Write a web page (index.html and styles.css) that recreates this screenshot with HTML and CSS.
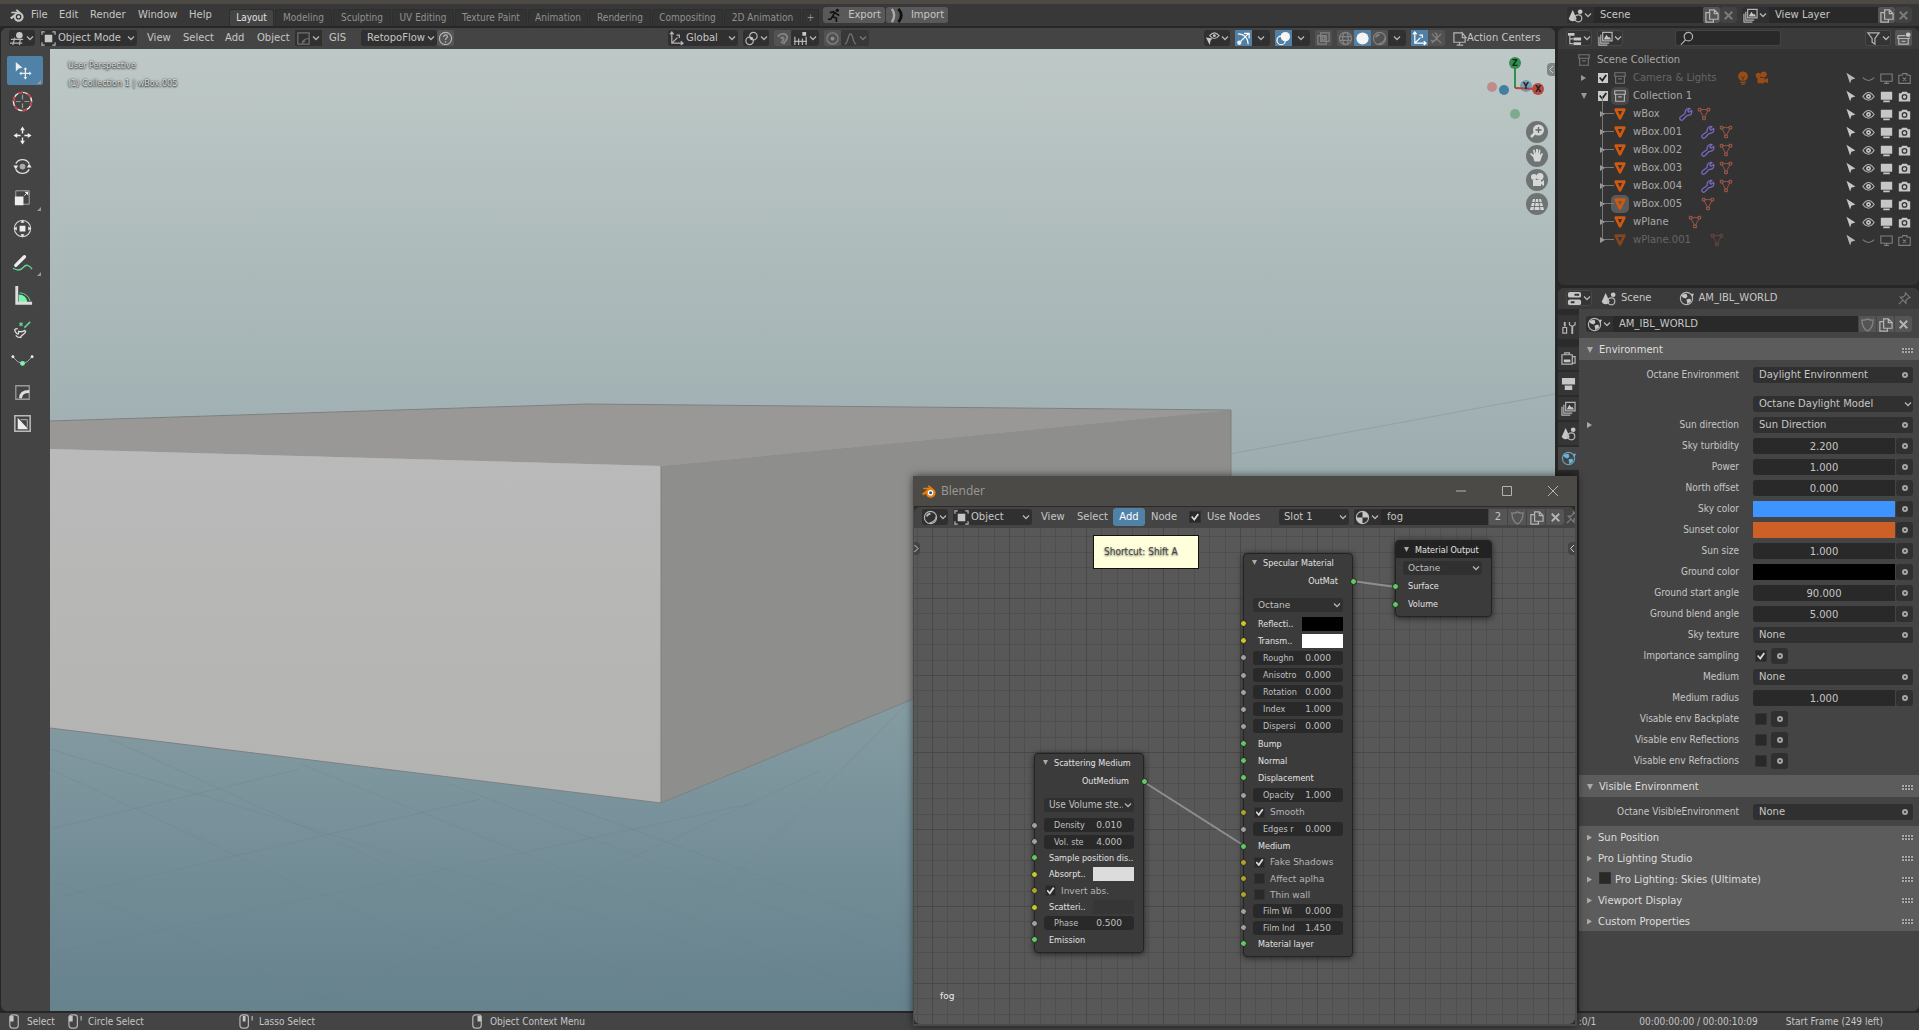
FILE: index.html
```html
<!DOCTYPE html>
<html lang="en">
<head>
<meta charset="utf-8">
<title>Blender</title>
<link rel="stylesheet" href="styles.css">
</head>
<body>
<svg class="defs" aria-hidden="true">
  <symbol id="caret" viewBox="0 0 10 10"><path class="ln" d="M2 3.5l3 3 3-3"/></symbol>
  <symbol id="blender" viewBox="0 0 16 16"><path class="lt" d="M1 10.500L7 5.500H2.500V4H9L7 2.500 8.500 1.200l5.500 4.600a5.200 5.200 0 1 1-8.800 4.200L3 12z"/><circle class="hole" cx="10.200" cy="9.300" r="3"/><circle class="pupil" cx="10.200" cy="9.300" r="1.600"/></symbol>
  <symbol id="view3d" viewBox="0 0 16 16"><path class="ln" d="M1 9h13M0 13h13M5 7l-2 8M11 9l-1 6"/><circle class="lt" cx="10" cy="4.500" r="3.500"/></symbol>
  <symbol id="objmode" viewBox="0 0 16 16"><path class="lt" d="M4 4h8v8H4z"/><path class="ln" d="M1 4V1h3M12 1h3v3M15 12v3h-3M4 15H1v-3"/></symbol>
  <symbol id="corner" viewBox="0 0 16 16"><path class="ln" d="M2 2h12v12H2zM7 14c0-4 2-6 7-6M7 14v-3h3"/></symbol>
  <symbol id="help" viewBox="0 0 16 16"><circle class="ln" cx="8" cy="8" r="6.500"/><path class="ln" d="M6 6.500c0-3 4-3 4-.5C10 7.500 8 7.500 8 9.500M8 11v1.500"/></symbol>
  <symbol id="axes" viewBox="0 0 16 16"><path class="ln" d="M3 1v12h12M3 13l6-6M1 3.500L3 1l2 2.500M12.500 11l2.500 2-2.500 2M8 4.500h3v3"/></symbol>
  <symbol id="link" viewBox="0 0 16 16"><circle class="ln" cx="10" cy="5.500" r="4"/><circle class="ln" cx="6" cy="10.500" r="4"/><circle class="lt" cx="8" cy="8" r="1.500"/></symbol>
  <symbol id="magnet" viewBox="0 0 16 16"><path class="thick" d="M3 6c4-5 10-3 10 1 0 3-3 4-4 7M6 8c2-2 4-1 3 1l-2 4"/></symbol>
  <symbol id="incr" viewBox="0 0 16 16"><path class="ln" d="M2 6v9M6 8v7M10 8v7M14 6v9M1 11h14"/><path class="lt" d="M10 1h4v4h-4z"/></symbol>
  <symbol id="prop" viewBox="0 0 16 16"><circle class="ln" cx="8" cy="8" r="6"/><circle class="lt" cx="8" cy="8" r="2"/></symbol>
  <symbol id="falloff" viewBox="0 0 16 16"><path class="ln" d="M2 14c4-1 3-11 6-11s2 10 6 11"/></symbol>
  <symbol id="eyecur" viewBox="0 0 16 16"><path class="lt" d="M1 7l7 1-2 2-1 5z"/><path class="ln" d="M5 5q5-6 10 0-5 6-10 0z"/><circle class="lt" cx="10" cy="5" r="1.500"/></symbol>
  <symbol id="gizmo" viewBox="0 0 16 16"><path class="ln" d="M2 3c7 0 11 5 11 11M3 13L13 3M8.500 2.500H14V8"/><circle class="lt" cx="3.500" cy="12.500" r="2.300"/></symbol>
  <symbol id="overlay" viewBox="0 0 16 16"><circle class="lt" cx="10" cy="6" r="5"/><circle class="ln" cx="5.500" cy="10" r="4.500"/></symbol>
  <symbol id="xray" viewBox="0 0 16 16"><path class="ln" d="M2 5h9v9H2zM5 2h9v9H5zM6.500 6.500h3v3h-3z"/></symbol>
  <symbol id="wire" viewBox="0 0 16 16"><circle class="ln" cx="8" cy="8" r="6.500"/><ellipse class="ln" cx="8" cy="8" rx="3" ry="6.500"/><path class="ln" d="M2 6h12M2 10h12"/></symbol>
  <symbol id="solid" viewBox="0 0 16 16"><circle class="lt" cx="8" cy="8" r="6.500"/></symbol>
  <symbol id="matball" viewBox="0 0 16 16"><circle class="ln" cx="8" cy="8" r="6.500"/><path class="thick" d="M4 7q1-3 4-3"/><path class="ln" d="M7 14q7-2 7-7"/></symbol>
  <symbol id="shader" viewBox="0 0 16 16"><circle class="ln" cx="8" cy="8" r="6.500"/><path class="lt" d="M8 1.500v6.500h6.500A6.500 6.500 0 0 0 8 1.500zM8 8v6.500A6.500 6.500 0 0 1 1.500 8z"/></symbol>
  <symbol id="cross4" viewBox="0 0 16 16"><path class="ln" d="M3 3l10 10M13 3L3 13M6 2q4 1 2 6M2 10q5 2 6-2"/></symbol>
  <symbol id="screen" viewBox="0 0 16 16"><path class="ln" d="M14 7v5H2V2h9M8 12v3M5 15h7M11 2l4 5h-4z"/></symbol>
  <symbol id="scene" viewBox="0 0 16 16"><path class="lt" d="M5 2l4 9q0 3-4 3t-4-3z"/><circle class="lt" cx="13" cy="4" r="2.500"/><circle class="ln" cx="11" cy="11" r="3.700"/></symbol>
  <symbol id="layers" viewBox="0 0 16 16"><path class="ln" d="M5 1.500h10v9H5zM3 4v9h9M1 6v9h9"/><path class="lt" d="M6 9l3-5 2 3 1-1 2 3z"/></symbol>
  <symbol id="copy" viewBox="0 0 16 16"><path class="ln" d="M6 2h5l4 4v6H6zM11 2v4h4M6 5H2v10h8v-3"/></symbol>
  <symbol id="close" viewBox="0 0 16 16"><path class="thick" d="M4 4l8 8M12 4l-8 8"/></symbol>
  <symbol id="outliner" viewBox="0 0 16 16"><path class="lt" d="M1 2h7v3H1zM7 7h8v3H7zM7 12h8v3H7z"/><path class="ln" d="M3 5v8.500h4M3 8.500h4"/></symbol>
  <symbol id="search" viewBox="0 0 16 16"><circle class="ln" cx="10" cy="6" r="4.500"/><path class="ln" d="M7 9.500l-5 5"/></symbol>
  <symbol id="filter" viewBox="0 0 16 16"><path class="ln" d="M2 2h12L9.500 8v6l-3-2V8z"/></symbol>
  <symbol id="newcol" viewBox="0 0 16 16"><path class="ln" d="M2 5h8M2 5v3h12V7M3 8v6h10V8M6 11h4"/><circle class="lt" cx="13" cy="4" r="2.500"/></symbol>
  <symbol id="coll" viewBox="0 0 16 16"><path class="ln" d="M2 2h12v4H2zM3 6v8h10V6M6 9h4"/></symbol>
  <symbol id="mesh" viewBox="0 0 16 16"><path fill="none" stroke="#d0590f" stroke-width="3" stroke-linejoin="round" d="M3 3h10L8 13z"/></symbol>
  <symbol id="mdata" viewBox="0 0 16 16"><path fill="none" stroke="#a4574a" d="M3 3h10L8 13z"/><path fill="#333" stroke="#b8604f" d="M1.500 1.500h3v3h-3zM11.500 1.500h3v3h-3zM6.500 11.500h3v3h-3z"/></symbol>
  <symbol id="wrench" viewBox="0 0 16 16"><path fill="none" stroke="#7c68c4" stroke-width="1.400" d="M1.500 14.500q-1.500-2 .5-3.500l5-3.500q-.5-5 4-6 1 0 1.500.3L10 4.500l1.500 1.500L14.500 4q1 5-4 5.500l-1.500.3L5 14q-1.500 2-3.500.5z"/></symbol>
  <symbol id="bulb" viewBox="0 0 16 16"><circle cx="8" cy="6" r="5.500" fill="#9a4c17"/><path stroke="#9a4c17" stroke-width="1.500" d="M5 13h6M6 15h4"/><path fill="none" stroke="#333" d="M6 6l2 2 2-2M8 8v3"/></symbol>
  <symbol id="cam" viewBox="0 0 16 16"><g fill="#9a4c17"><circle cx="5" cy="5" r="3"/><circle cx="11" cy="4" r="3.500"/><path d="M4 8h8v6H4zM12 10l4-2v6l-4-2z"/></g></symbol>
  <symbol id="cur" viewBox="0 0 16 16"><path class="lt" d="M3 1l11 7-5 1.500L7.500 14z"/></symbol>
  <symbol id="eye" viewBox="0 0 16 16"><path class="ln" d="M1 8q7-10 14 0-7 9-14 0z"/><circle class="lt" cx="8" cy="8" r="3"/><circle class="hole" cx="8" cy="8" r="1"/></symbol>
  <symbol id="shut" viewBox="0 0 16 16"><path class="ln" d="M1 7q7 7 14 0"/></symbol>
  <symbol id="mon" viewBox="0 0 16 16"><path class="lt" d="M1 2h14v10H1zM4 13h8v2H4z"/></symbol>
  <symbol id="monoff" viewBox="0 0 16 16"><path class="ln" d="M1 2.500h14v9H1zM5 14h6M8 12v2"/></symbol>
  <symbol id="ren" viewBox="0 0 16 16"><path class="lt" d="M1 4h3l1-2h6l1 2h3v10H1z"/><circle class="hole" cx="8" cy="8.500" r="3.500"/><circle class="lt" cx="8" cy="8.500" r="2"/></symbol>
  <symbol id="renoff" viewBox="0 0 16 16"><path class="ln" d="M1 4h4l1-2h5v2h4v10H1zM6 7l4 4M10 7l-4 4"/></symbol>
  <symbol id="props" viewBox="0 0 16 16"><rect class="lt" x="1" y="1" width="14" height="6" rx="2"/><rect class="lt" x="1" y="9" width="14" height="6" rx="2"/><path stroke="#333" stroke-width="2" d="M8 4h5M4 12h4"/></symbol>
  <symbol id="world" viewBox="0 0 16 16"><circle class="ln" cx="8" cy="8" r="6.500"/><path class="lt" d="M2 4l6-1 1 3-2 2-3-1zM8 9l4-1 1 3-4 3zM13 3h3l-2 4z"/></symbol>
  <symbol id="pin" viewBox="0 0 16 16"><path class="ln" d="M9 2l5 5-2 .5-2.500 2.500v3L3.500 6.500h3L9 4zM6 10l-4 4"/></symbol>
  <symbol id="shield" viewBox="0 0 16 16"><path class="ln" d="M8 2q3 2 6 1 0 9-6 12-6-3-6-12 3 1 6-1z"/></symbol>
  <symbol id="tool" viewBox="0 0 16 16"><path class="thick" d="M4 2v5M12 7v8"/><path class="ln" d="M2 8h4v6H2zM9 2v3l3 2 3-2V2"/></symbol>
  <symbol id="rentab" viewBox="0 0 16 16"><path class="ln" d="M1 4h11v10H1zM4 4V2h5v2M12 6h3v7h-3"/><path class="lt" d="M3 9h7v3H3z"/></symbol>
  <symbol id="printer" viewBox="0 0 16 16"><path class="lt" d="M1 2h14v7H1zM4 10h8v5H4z"/></symbol>
  <symbol id="run" viewBox="0 0 16 16"><path fill="none" stroke="#111" stroke-width="1.800" d="M3 5l4-1 3 2 3 2M8 5L6 9l4 2v4M6 9l-2 3H1"/><circle cx="11" cy="2.500" r="1.800" fill="#111"/></symbol>
  <symbol id="chevs" viewBox="0 0 16 16"><path fill="none" stroke="#aaa" stroke-width="2.500" d="M2 1q5 7 0 14"/><path fill="none" stroke="#111" stroke-width="3" d="M9 1q6 7 0 14"/></symbol>
  <symbol id="mouseL" viewBox="0 0 16 16"><rect class="ln" x="3" y="1" width="9" height="14" rx="3"/><path class="lt" d="M3 2h4v6H3z"/></symbol>
  <symbol id="mouseD" viewBox="0 0 16 16"><rect class="ln" x="1" y="1" width="9" height="14" rx="3"/><path class="lt" d="M1 2h4v6H1z"/><path class="ln" d="M14 2v5"/></symbol>
  <symbol id="mouseM" viewBox="0 0 16 16"><rect class="ln" x="1" y="1" width="9" height="14" rx="3"/><path class="lt" d="M4 2h3v6H4z"/><path class="ln" d="M14 2v5"/></symbol>
  <symbol id="mouseR" viewBox="0 0 16 16"><rect class="ln" x="3" y="1" width="9" height="14" rx="3"/><path class="lt" d="M8 2h4v6H8z"/></symbol>
</svg>

<div class="app">
  <div class="strip"></div>
  <header class="topbar">
    <div class="top-left">
      <button class="logo" aria-label="Blender"><svg class="ic"><use href="#blender"/></svg></button>
      <nav class="menus"><button>File</button><button>Edit</button><button>Render</button><button>Window</button><button>Help</button></nav>
      <nav class="tabs"><button class="on">Layout</button><button>Modeling</button><button>Sculpting</button><button>UV Editing</button><button>Texture Paint</button><button>Animation</button><button>Rendering</button><button>Compositing</button><button>2D Animation</button><button>+</button></nav>
      <div class="bridge"><button><svg class="ic"><use href="#run"/></svg>Export</button><button><svg class="ic"><use href="#chevs"/></svg>Import</button></div>
    </div>
    <div class="top-right">
      <div class="idblock"><button class="pick"><svg class="ic"><use href="#scene"/></svg><svg class="car"><use href="#caret"/></svg></button><input aria-label="Scene" value="Scene"><button class="sq"><svg class="ic"><use href="#copy"/></svg></button><button class="sq dim"><svg class="ic"><use href="#close"/></svg></button></div>
      <div class="idblock"><button class="pick"><svg class="ic"><use href="#layers"/></svg><svg class="car"><use href="#caret"/></svg></button><input aria-label="View Layer" value="View Layer"><button class="sq"><svg class="ic"><use href="#copy"/></svg></button><button class="sq dim"><svg class="ic"><use href="#close"/></svg></button></div>
    </div>
  </header>

  <main class="work">
    <section class="area view">
      <div class="bar vbar">
        <button class="dd"><svg class="ic"><use href="#view3d"/></svg><svg class="car"><use href="#caret"/></svg></button>
        <div class="dd mode"><svg class="ic"><use href="#objmode"/></svg><select aria-label="Mode"><option>Object Mode</option></select><svg class="car"><use href="#caret"/></svg></div>
        <nav class="vmenus"><button>View</button><button>Select</button><button>Add</button><button>Object</button></nav>
        <button class="dd flat"><svg class="ic faint"><use href="#corner"/></svg><svg class="car"><use href="#caret"/></svg></button>
        <button class="gis">GIS</button>
        <div class="grp"><div class="dd retopo"><select aria-label="RetopoFlow"><option>RetopoFlow</option></select><svg class="car"><use href="#caret"/></svg></div><button class="sq"><svg class="ic"><use href="#help"/></svg></button></div>
        <div class="mid">
          <div class="dd orient"><svg class="ic"><use href="#axes"/></svg><select aria-label="Orientation"><option>Global</option></select><svg class="car"><use href="#caret"/></svg></div>
          <button class="dd"><svg class="ic"><use href="#link"/></svg><svg class="car"><use href="#caret"/></svg></button>
          <div class="grp"><button class="sq off"><svg class="ic"><use href="#magnet"/></svg></button><button class="dd wide"><svg class="ic"><use href="#incr"/></svg><svg class="car"><use href="#caret"/></svg></button></div>
          <div class="grp"><button class="sq off"><svg class="ic"><use href="#prop"/></svg></button><button class="dd wide ghost"><svg class="ic"><use href="#falloff"/></svg><svg class="car"><use href="#caret"/></svg></button></div>
        </div>
        <div class="shade">
          <button class="dd"><svg class="ic"><use href="#eyecur"/></svg><svg class="car"><use href="#caret"/></svg></button>
          <div class="grp"><button class="sq blue"><svg class="ic"><use href="#gizmo"/></svg></button><button class="dd cc"><svg class="car"><use href="#caret"/></svg></button></div>
          <div class="grp"><button class="sq blue"><svg class="ic"><use href="#overlay"/></svg></button><button class="dd cc"><svg class="car"><use href="#caret"/></svg></button></div>
          <button class="sq off"><svg class="ic"><use href="#xray"/></svg></button>
          <div class="grp"><button class="sq off"><svg class="ic"><use href="#wire"/></svg></button><button class="sq blue"><svg class="ic"><use href="#solid"/></svg></button><button class="sq off"><svg class="ic"><use href="#matball"/></svg></button><button class="dd cc"><svg class="car"><use href="#caret"/></svg></button></div>
          <div class="grp"><button class="sq blue"><svg class="ic"><use href="#axes"/></svg></button><button class="sq off"><svg class="ic"><use href="#cross4"/></svg></button></div>
          <button class="actions"><svg class="ic"><use href="#screen"/></svg>Action Centers</button>
        </div>
      </div>
      <div class="stage">
        <div class="toolbar">
          <button class="on" aria-label="Select"><svg viewBox="0 0 24 24"><path fill="#eee" d="M5 3l7 6-4 1-3 3z"/><path stroke="#eee" fill="none" stroke-width="1.300" d="M15 10v10M10 15h10"/><path fill="#eee" d="M15 8.500l2 2.500h-4zM15 21.500l2-2.500h-4zM8.500 15l2.500-2v4zM21.500 15L19 13v4z"/></svg></button>
          <button aria-label="Cursor"><svg viewBox="0 0 24 24"><circle cx="12" cy="12" r="9.500" fill="none" stroke="#e8e8e8" stroke-width="1.500"/><circle cx="12" cy="12" r="9.500" fill="none" stroke="#c8383c" stroke-width="1.800" stroke-dasharray="5 5"/><path stroke="#999" stroke-width="1.300" d="M12 5v5M12 14v5M5 12h5M14 12h5"/></svg></button>
          <button class="sep" aria-label="Move"><svg viewBox="0 0 24 24"><path stroke="#eee" stroke-width="1.500" d="M12 6v4M12 14v4M6 12h4M14 12h4"/><path fill="#eee" d="M12 2.500l2.500 4h-5zM12 21.500l2.500-4h-5zM2.500 12l4-2.500v5zM21.500 12l-4-2.500v5z"/></svg></button>
          <button aria-label="Rotate"><svg viewBox="0 0 24 24"><path fill="none" stroke="#ddd" stroke-width="1.400" d="M5 9a8 8 0 0 1 14 0M19 15a8 8 0 0 1-14 0"/><path fill="#eee" d="M2.500 11h5L5 15zM16.500 13h5L19 9z"/><circle cx="12" cy="12" r="3" fill="#aaa"/></svg></button>
          <button class="more" aria-label="Scale"><svg viewBox="0 0 24 24"><path fill="none" stroke="#aaa" d="M5 5h14v14H5z"/><path fill="#eee" d="M4 11h9v9H4zM18 6v4l-4-4z"/><path stroke="#eee" d="M14 10l3-3"/></svg></button>
          <button aria-label="Transform"><svg viewBox="0 0 24 24"><circle cx="12" cy="12" r="8.500" fill="none" stroke="#ccc" stroke-width="1.200"/><path fill="#eee" d="M9 9h6v6H9zM12 3l2 3h-4zM12 21l2-3h-4zM3 12l3-2v4zM21 12l-3-2v4z"/></svg></button>
          <button class="sep more" aria-label="Annotate"><svg viewBox="0 0 24 24"><path stroke="#eee" stroke-width="3.500" stroke-linecap="round" d="M5 15l9-9"/><path fill="none" stroke="#62d694" stroke-width="1.400" d="M2 18q7 4 11-1t9 2"/></svg></button>
          <button class="sep" aria-label="Measure"><svg viewBox="0 0 24 24"><path fill="#7bf5ae" d="M8 10q8 0 9 8H8z"/><path fill="none" stroke="#ddd" stroke-width="3" d="M6 1v18h16"/><path fill="none" stroke="#62d694" d="M9 8q9 1 11 9"/></svg></button>
          <button class="sep" aria-label="Relax"><svg viewBox="0 0 24 24"><path fill="none" stroke="#ddd" stroke-width="1.400" d="M7 10q-5 0-2 4t3-1q4 1 6-1 3 1-1 4t-2 3q-4 1-6-2"/><path stroke="#62d694" stroke-width="1.500" d="M14 9l6-6M9 4l3 3M12 4L9 7"/></svg></button>
          <button aria-label="Curve"><svg viewBox="0 0 24 24"><path fill="none" stroke="#aaa" d="M2 7q10 14 20 0"/><circle cx="2" cy="7" r="1.500" fill="#eee"/><circle cx="22" cy="7" r="1.500" fill="#eee"/><circle cx="12" cy="14" r="2.500" fill="#7bf5ae"/></svg></button>
          <button aria-label="Bevel"><svg viewBox="0 0 24 24"><path fill="none" stroke="#999" stroke-width="1.400" d="M5 5h14v14H5z"/><path fill="none" stroke="#ddd" stroke-width="3" d="M10 18q0-7 9-7"/></svg></button>
          <button aria-label="Mirror"><svg viewBox="0 0 24 24"><path fill="none" stroke="#bbb" stroke-width="1.600" d="M4 4h16v16H4z"/><path fill="#eee" d="M7 6l11 12H7z"/><path fill="none" stroke="#bbb" d="M10 8h7v8"/></svg></button>
        </div>
        <div class="scene3d">
          <svg class="world3d" viewBox="0 0 1505 962" preserveAspectRatio="xMinYMin slice">
            <defs>
              <linearGradient id="sky" x1="0" y1="0" x2="0" y2="1"><stop offset="0" stop-color="#bec9c7"/><stop offset=".2" stop-color="#afbcbc"/><stop offset=".4" stop-color="#a0b0b2"/><stop offset=".6" stop-color="#8ea2a7"/><stop offset=".8" stop-color="#78919a"/><stop offset="1" stop-color="#66828d"/></linearGradient>
              <linearGradient id="front" x1="0" y1="0" x2="0" y2="1"><stop offset="0" stop-color="#bababa"/><stop offset="1" stop-color="#b3b3b1"/></linearGradient>
            </defs>
            <path fill="url(#sky)" d="M0 0h1505v962H0z"/>
            <g fill="none" stroke="#6d8084" stroke-opacity=".3">
              <path d="M0 720l520 242M0 830l300 132M60 690l600 272M250 715l620 247M400 735l520 200M500 750l380 140M0 905l700-150M0 850l430-100M550 962l420-420M250 962l520-240M0 780l250-60M1180 405l325-60M820 962l100-110M0 700l860 262"/>
            </g>
            <path stroke="#a9655e" d="M825 646l80 4"/>
            <path fill="#999896" d="M0 372l537-17 644 6-570 56L0 400z"/>
            <path fill="url(#front)" d="M0 400l611 17v337L0 679z"/>
            <path fill="#8e8e8c" d="M611 417l570-56v158L611 754z"/>
            <path fill="none" stroke="#7d8180" d="M0 372l537-17 644 6v158L611 754 0 679M611 417v337"/>
          </svg>
          <div class="info"><p>User Perspective</p><p>(1) Collection 1 | wBox.005</p></div>
          <div class="overlay">
            <button class="handle" aria-label="Sidebar">
              <svg viewBox="0 0 8 13"><path d="M6 3L2.500 6.500 6 10"/></svg></button>
            <svg class="axisball" viewBox="0 0 64 72">
              <circle cx="10" cy="31" r="5" fill="#bf8c89"/><circle cx="22" cy="34" r="5" fill="#437f9f"/><circle cx="33" cy="58" r="5" fill="#7dab8c"/><circle cx="44" cy="30" r="6" fill="#779eb2"/>
              <path stroke="#2f9050" stroke-width="2" d="M33 32V10"/><path stroke="#b8443f" stroke-width="2" d="M33 32l22 1"/>
              <circle cx="33" cy="7" r="6" fill="#2f9050"/><circle cx="56" cy="33" r="6" fill="#b84a44"/>
              <text x="33" y="10">Z</text><text x="56" y="36">X</text><text x="44" y="33">Y</text>
            </svg>
            <div class="nav">
              <button aria-label="Zoom"><svg viewBox="0 0 22 22"><circle cx="12.500" cy="9" r="5.500"/><path stroke="#d5d8d7" stroke-width="2.500" d="M9 12l-4 4"/><path stroke="#666" stroke-width="1.300" d="M12.500 6v6M9.500 9h6"/></svg></button>
              <button aria-label="Pan"><svg viewBox="0 0 22 22"><path d="M7 12l-3-3 1-1 3 2-1-5 1.500-.5L10 9V4h2v5l1-4.500 1.500.5-.500 5 2-2 1 .5-3 8H8.500z"/></svg></button>
              <button aria-label="Camera"><svg viewBox="0 0 22 22"><circle cx="8" cy="8" r="3"/><circle cx="14" cy="7.500" r="3.500"/><path d="M7 11h8v6H7zM15 13l3-2v6l-3-2z"/></svg></button>
              <button aria-label="Perspective"><svg viewBox="0 0 22 22"><path d="M7 6h8l3 11H4z"/><path stroke="#6e7473" d="M4 9.500h14M4 13.500h14M9.500 6L8 17M12.500 6L14 17"/></svg></button>
            </div>
          </div>
        </div>
      </div>
    </section>

    <aside class="side">
      <section class="area outl">
        <div class="bar obar">
          <button class="dd edge"><svg class="ic"><use href="#outliner"/></svg><svg class="car"><use href="#caret"/></svg></button>
          <button class="dd edge"><svg class="ic"><use href="#layers"/></svg><svg class="car"><use href="#caret"/></svg></button>
          <label class="find"><svg class="ic"><use href="#search"/></svg><input type="search" aria-label="Search"></label>
          <button class="dd edge"><svg class="ic"><use href="#filter"/></svg><svg class="car"><use href="#caret"/></svg></button>
          <button class="sq"><svg class="ic"><use href="#newcol"/></svg></button>
        </div>
        <ul class="tree">
          <li class="root"><svg class="ic faint"><use href="#coll"/></svg><span>Scene Collection</span></li>
          <li class="dim"><i class="tri"></i><input type="checkbox" checked aria-label="Camera &amp; Lights"><svg class="ic faint"><use href="#coll"/></svg><span>Camera &amp; Lights</span><svg class="ic ex"><use href="#bulb"/></svg><svg class="ic"><use href="#cam"/></svg><div class="tg"><svg><use href="#cur"/></svg><svg><use href="#shut"/></svg><svg><use href="#monoff"/></svg><svg><use href="#renoff"/></svg></div></li>
          <li><i class="tri down"></i><input type="checkbox" checked aria-label="Collection 1"><svg class="ic ring"><use href="#coll"/></svg><span>Collection 1</span><div class="tg"><svg><use href="#cur"/></svg><svg><use href="#eye"/></svg><svg><use href="#mon"/></svg><svg><use href="#ren"/></svg></div></li>
          <li class="kid"><i class="tri"></i><svg class="ic"><use href="#mesh"/></svg><span>wBox</span><svg class="ic ex"><use href="#wrench"/></svg><svg class="ic"><use href="#mdata"/></svg><div class="tg"><svg><use href="#cur"/></svg><svg><use href="#eye"/></svg><svg><use href="#mon"/></svg><svg><use href="#ren"/></svg></div></li>
          <li class="kid"><i class="tri"></i><svg class="ic"><use href="#mesh"/></svg><span>wBox.001</span><svg class="ic ex"><use href="#wrench"/></svg><svg class="ic"><use href="#mdata"/></svg><div class="tg"><svg><use href="#cur"/></svg><svg><use href="#eye"/></svg><svg><use href="#mon"/></svg><svg><use href="#ren"/></svg></div></li>
          <li class="kid"><i class="tri"></i><svg class="ic"><use href="#mesh"/></svg><span>wBox.002</span><svg class="ic ex"><use href="#wrench"/></svg><svg class="ic"><use href="#mdata"/></svg><div class="tg"><svg><use href="#cur"/></svg><svg><use href="#eye"/></svg><svg><use href="#mon"/></svg><svg><use href="#ren"/></svg></div></li>
          <li class="kid"><i class="tri"></i><svg class="ic"><use href="#mesh"/></svg><span>wBox.003</span><svg class="ic ex"><use href="#wrench"/></svg><svg class="ic"><use href="#mdata"/></svg><div class="tg"><svg><use href="#cur"/></svg><svg><use href="#eye"/></svg><svg><use href="#mon"/></svg><svg><use href="#ren"/></svg></div></li>
          <li class="kid"><i class="tri"></i><svg class="ic"><use href="#mesh"/></svg><span>wBox.004</span><svg class="ic ex"><use href="#wrench"/></svg><svg class="ic"><use href="#mdata"/></svg><div class="tg"><svg><use href="#cur"/></svg><svg><use href="#eye"/></svg><svg><use href="#mon"/></svg><svg><use href="#ren"/></svg></div></li>
          <li class="kid"><i class="tri"></i><svg class="ic ring fill"><use href="#mesh"/></svg><span>wBox.005</span><svg class="ic ex"><use href="#mdata"/></svg><div class="tg"><svg><use href="#cur"/></svg><svg><use href="#eye"/></svg><svg><use href="#mon"/></svg><svg><use href="#ren"/></svg></div></li>
          <li class="kid"><i class="tri"></i><svg class="ic"><use href="#mesh"/></svg><span>wPlane</span><svg class="ic ex"><use href="#mdata"/></svg><div class="tg"><svg><use href="#cur"/></svg><svg><use href="#eye"/></svg><svg><use href="#mon"/></svg><svg><use href="#ren"/></svg></div></li>
          <li class="kid dim last"><i class="tri"></i><svg class="ic half"><use href="#mesh"/></svg><span>wPlane.001</span><svg class="ic ex half"><use href="#mdata"/></svg><div class="tg lit"><svg><use href="#cur"/></svg><svg><use href="#shut"/></svg><svg><use href="#monoff"/></svg><svg><use href="#renoff"/></svg></div></li>
        </ul>
      </section>

      <section class="area props">
        <div class="bar pbar">
          <button class="dd edge"><svg class="ic"><use href="#props"/></svg><svg class="car"><use href="#caret"/></svg></button>
          <span class="crumb"><svg class="ic"><use href="#scene"/></svg>Scene</span>
          <span class="crumb"><svg class="ic"><use href="#world"/></svg>AM_IBL_WORLD</span>
          <button class="bare"><svg class="ic faint"><use href="#pin"/></svg></button>
        </div>
        <div class="pmain">
          <nav class="ptabs">
            <button class="first" aria-label="Tool"><svg class="ic"><use href="#tool"/></svg></button>
            <button aria-label="Render"><svg class="ic"><use href="#rentab"/></svg></button>
            <button aria-label="Output"><svg class="ic"><use href="#printer"/></svg></button>
            <button aria-label="View Layer"><svg class="ic"><use href="#layers"/></svg></button>
            <button aria-label="Scene"><svg class="ic"><use href="#scene"/></svg></button>
            <button class="on" aria-label="World"><svg class="ic"><use href="#world"/></svg></button>
          </nav>
          <div class="pbody">
            <div class="idblock wide"><button class="pick"><svg class="ic"><use href="#world"/></svg><svg class="car"><use href="#caret"/></svg></button><input aria-label="World" value="AM_IBL_WORLD"><button class="sq g"><svg class="ic faint"><use href="#shield"/></svg></button><button class="sq g"><svg class="ic"><use href="#copy"/></svg></button><button class="sq g"><svg class="ic"><use href="#close"/></svg></button></div>

            <button class="phead"><i class="tri down"></i>Environment<i class="grip"></i></button>
            <div class="rows">
              <div class="r first"><label for="f1">Octane Environment</label><div class="sel"><select id="f1"><option>Daylight Environment</option></select><b class="dot"></b></div></div>
              <div class="r"><span></span><div class="sel"><select aria-label="Daylight model"><option>Octane Daylight Model</option></select><svg class="car"><use href="#caret"/></svg></div></div>
              <div class="r"><i class="tri"></i><label for="f3">Sun direction</label><div class="sel"><select id="f3"><option>Sun Direction</option></select><b class="dot"></b></div></div>
              <div class="r"><label for="f4">Sky turbidity</label><div class="num"><input id="f4" value="2.200"><b class="dot"></b></div></div>
              <div class="r"><label for="f5">Power</label><div class="num"><input id="f5" value="1.000"><b class="dot"></b></div></div>
              <div class="r"><label for="f6">North offset</label><div class="num"><input id="f6" value="0.000"><b class="dot"></b></div></div>
              <div class="r"><label for="f7">Sky color</label><div class="num"><button id="f7" class="sw sky"></button><b class="dot"></b></div></div>
              <div class="r"><label for="f8">Sunset color</label><div class="num"><button id="f8" class="sw sunset"></button><b class="dot"></b></div></div>
              <div class="r"><label for="f9">Sun size</label><div class="num"><input id="f9" value="1.000"><b class="dot"></b></div></div>
              <div class="r"><label for="f10">Ground color</label><div class="num"><button id="f10" class="sw black"></button><b class="dot"></b></div></div>
              <div class="r"><label for="f11">Ground start angle</label><div class="num"><input id="f11" value="90.000"><b class="dot"></b></div></div>
              <div class="r"><label for="f12">Ground blend angle</label><div class="num"><input id="f12" value="5.000"><b class="dot"></b></div></div>
              <div class="r"><label for="f13">Sky texture</label><div class="sel"><select id="f13"><option>None</option></select><b class="dot"></b></div></div>
              <div class="r"><label for="f14">Importance sampling</label><div class="chk"><input type="checkbox" id="f14" checked><b class="dot"></b></div></div>
              <div class="r"><label for="f15">Medium</label><div class="sel"><select id="f15"><option>None</option></select><b class="dot"></b></div></div>
              <div class="r"><label for="f16">Medium radius</label><div class="num"><input id="f16" value="1.000"><b class="dot"></b></div></div>
              <div class="r"><label for="f17">Visable env Backplate</label><div class="chk"><input type="checkbox" id="f17"><b class="dot"></b></div></div>
              <div class="r"><label for="f18">Visable env Reflections</label><div class="chk"><input type="checkbox" id="f18"><b class="dot"></b></div></div>
              <div class="r"><label for="f19">Visable env Refractions</label><div class="chk"><input type="checkbox" id="f19"><b class="dot"></b></div></div>
            </div>
            <button class="phead"><i class="tri down"></i>Visible Environment<i class="grip"></i></button>
            <div class="rows">
              <div class="r"><label for="f20">Octane VisibleEnvironment</label><div class="sel"><select id="f20"><option>None</option></select><b class="dot"></b></div></div>
            </div>
            <button class="phead shut"><i class="tri"></i>Sun Position<i class="grip"></i></button>
            <button class="phead shut"><i class="tri"></i>Pro Lighting Studio<i class="grip"></i></button>
            <div class="phead shut"><i class="tri"></i><input type="checkbox" id="skies"><label for="skies">Pro Lighting: Skies (Ultimate)</label><i class="grip"></i></div>
            <button class="phead shut"><i class="tri"></i>Viewport Display<i class="grip"></i></button>
            <button class="phead shut"><i class="tri"></i>Custom Properties<i class="grip"></i></button>
          </div>
        </div>
      </section>
    </aside>
  </main>

  <footer class="status">
    <span class="s1"><svg class="ic"><use href="#mouseL"/></svg>Select</span>
    <span class="s2"><svg class="ic"><use href="#mouseD"/></svg>Circle Select</span>
    <span class="s3"><svg class="ic"><use href="#mouseM"/></svg>Lasso Select</span>
    <span class="s4"><svg class="ic"><use href="#mouseR"/></svg>Object Context Menu</span>
    <span class="frames">:0/1</span><span class="time">00:00:00:00 / 00:00:10:09</span><span class="start">Start Frame (249 left)</span>
  </footer>
</div>

<section class="window">
  <div class="title"><svg class="ic"><use href="#blender"/></svg><span>Blender</span>
    <button aria-label="Minimize"><svg viewBox="0 0 12 12"><path d="M1 6h10"/></svg></button><button aria-label="Maximize"><svg viewBox="0 0 12 12"><path d="M1.500 1.500h9v9h-9z"/></svg></button><button aria-label="Close"><svg viewBox="0 0 12 12"><path d="M1 1l10 10M11 1L1 11"/></svg></button></div>
  <div class="bar nbar">
    <button class="dd"><svg class="ic"><use href="#matball"/></svg><svg class="car"><use href="#caret"/></svg></button>
    <div class="dd kind"><svg class="ic"><use href="#objmode"/></svg><select aria-label="Shader type"><option>Object</option></select><svg class="car"><use href="#caret"/></svg></div>
    <nav class="nmenus"><button>View</button><button>Select</button><button class="on">Add</button><button>Node</button></nav>
    <div class="use"><input type="checkbox" id="usenodes" checked><label for="usenodes">Use Nodes</label></div>
    <div class="dd slot"><select aria-label="Slot"><option>Slot 1</option></select><svg class="car"><use href="#caret"/></svg></div>
    <div class="idblock mat"><button class="pick"><svg class="ic"><use href="#shader"/></svg><svg class="car"><use href="#caret"/></svg></button><input aria-label="Material" value="fog"><button class="sq g">2</button><button class="sq g"><svg class="ic faint"><use href="#shield"/></svg></button><button class="sq g"><svg class="ic"><use href="#copy"/></svg></button><button class="sq g"><svg class="ic"><use href="#close"/></svg></button></div>
    <button class="bare"><svg class="ic faint"><use href="#pin"/></svg></button>
  </div>
  <div class="canvas">
    <svg class="links"><path d="M438 53l44 6M230 254l99 63"/></svg>
    <button class="handle hl" aria-label="Tools"><svg viewBox="0 0 8 13"><path d="M2.500 3L6 6.500 2.500 10"/></svg></button>
    <button class="handle hr" aria-label="Sidebar"><svg viewBox="0 0 8 13"><path d="M6 3L2.500 6.500 6 10"/></svg></button>
    <div class="tip" role="tooltip">Shortcut: Shift A</div>

    <article class="node scat">
      <h3><i class="tri down"></i>Scattering Medium</h3>
      <p class="out">OutMedium<b class="s green"></b></p>
      <div class="pick2"><select aria-label="Volume step"><option>Use Volume ste..</option></select><svg class="car"><use href="#caret"/></svg></div>
      <div class="ins">
        <div><b class="s gray"></b><label class="n"><span>Density</span><input value="0.010"></label></div>
        <div><b class="s gray"></b><label class="n"><span>Vol. ste</span><input value="4.000"></label></div>
        <div><b class="s green"></b><span class="t">Sample position dis..</span></div>
        <div><b class="s yellow"></b><span class="t">Absorpt..</span><button class="c pale" aria-label="Absorption color"></button></div>
        <div><b class="s ochre"></b><label class="k"><input type="checkbox" checked>Invert abs.</label></div>
        <div><b class="s yellow"></b><span class="t">Scatteri..</span><button class="c dark" aria-label="Scattering color"></button></div>
        <div><b class="s gray"></b><label class="n"><span>Phase</span><input value="0.500"></label></div>
        <div><b class="s green"></b><span class="t">Emission</span></div>
      </div>
    </article>

    <article class="node spec">
      <h3><i class="tri down"></i>Specular Material</h3>
      <p class="out">OutMat<b class="s green"></b></p>
      <div class="pick2"><select aria-label="Specular type"><option>Octane</option></select><svg class="car"><use href="#caret"/></svg></div>
      <div class="ins roomy">
        <div><b class="s yellow"></b><span class="t">Reflecti..</span><button class="c black" aria-label="Reflection color"></button></div>
        <div><b class="s yellow"></b><span class="t">Transm..</span><button class="c white" aria-label="Transmission color"></button></div>
        <div><b class="s gray"></b><label class="n"><span>Roughn</span><input value="0.000"></label></div>
        <div><b class="s gray"></b><label class="n"><span>Anisotro</span><input value="0.000"></label></div>
        <div><b class="s gray"></b><label class="n"><span>Rotation</span><input value="0.000"></label></div>
        <div><b class="s gray"></b><label class="n"><span>Index</span><input value="1.000"></label></div>
        <div><b class="s gray"></b><label class="n"><span>Dispersi</span><input value="0.000"></label></div>
        <div><b class="s green"></b><span class="t">Bump</span></div>
        <div><b class="s green"></b><span class="t">Normal</span></div>
        <div><b class="s green"></b><span class="t">Displacement</span></div>
        <div><b class="s gray"></b><label class="n"><span>Opacity</span><input value="1.000"></label></div>
        <div><b class="s ochre"></b><label class="k"><input type="checkbox" checked>Smooth</label></div>
        <div><b class="s gray"></b><label class="n"><span>Edges r</span><input value="0.000"></label></div>
      </div>
      <div class="ins tight">
        <div><b class="s green"></b><span class="t">Medium</span></div>
        <div><b class="s ochre"></b><label class="k"><input type="checkbox" checked>Fake Shadows</label></div>
        <div><b class="s ochre"></b><label class="k"><input type="checkbox">Affect aplha</label></div>
        <div><b class="s ochre"></b><label class="k"><input type="checkbox">Thin wall</label></div>
        <div><b class="s gray"></b><label class="n"><span>Film Wi</span><input value="0.000"></label></div>
        <div><b class="s gray"></b><label class="n"><span>Film Ind</span><input value="1.450"></label></div>
        <div><b class="s green"></b><span class="t">Material layer</span></div>
      </div>
    </article>

    <article class="node outp">
      <h3><i class="tri down"></i>Material Output</h3>
      <div class="pick2"><select aria-label="Output target"><option>Octane</option></select><svg class="car"><use href="#caret"/></svg></div>
      <div class="ins"><div><b class="s green"></b><span class="t">Surface</span></div><div><b class="s green"></b><span class="t">Volume</span></div></div>
    </article>
    <p class="matname">fog</p>
  </div>
</section>
</body>
</html>
```
FILE: styles.css
```css
*, *::before, *::after { box-sizing: border-box; }
body {
  margin: 0;
  overflow: hidden;
  background: #272727;
  color: #c6c6c6;
  font: 10px/14px "DejaVu Sans", sans-serif;
}
button, input, select { margin: 0; padding: 0; border: 0; background: none; color: inherit; font: inherit; outline: 0; min-width: 0; }
button { display: flex; align-items: center; justify-content: center; white-space: nowrap; }
select { appearance: none; flex: 1; overflow: visible; }
ul, p, h3 { margin: 0; padding: 0; list-style: none; font-weight: normal; }
i, b { font-style: normal; font-weight: normal; }
svg { display: block; flex: none; }
.defs { display: none; }

.ic { width: 15px; height: 15px; }
.car { width: 10px; height: 10px; }
.ln { fill: none; stroke: var(--line, #b4b4b4); stroke-width: 1.3; }
.thick { fill: none; stroke: var(--line, #b4b4b4); stroke-width: 2; }
.lt { fill: var(--solid, #c6c6c6); }
.hole { fill: var(--hole, #333); }
.pupil { fill: var(--pupil, #cfcfcf); }
.faint, .off .ic, .sq.dim .ic, .ghost svg { opacity: .5; }
.half { opacity: .5; }

input[type=checkbox] {
  appearance: none;
  display: grid;
  place-items: center;
  flex: none;
  width: 12px;
  height: 12px;
  background: #292929;
  border: 1px solid #333;
}
input[type=checkbox]:checked::after {
  content: "";
  width: 8px;
  height: 8px;
  background: #d8d8d8;
  clip-path: polygon(0 50%, 18% 38%, 38% 65%, 82% 5%, 100% 18%, 42% 100%);
}

.tri { flex: none; width: 5px; height: 6px; background: #aaa; clip-path: polygon(0 0, 100% 50%, 0 100%); }
.tri.down { width: 6px; height: 6px; clip-path: polygon(0 0, 100% 0, 50% 100%); }

/* frame */
.app { display: grid; grid-template-rows: 4px 22px 1fr 17px; height: 100vh; }
.strip { background: #4d4a46; }
.topbar { display: grid; grid-template-columns: 1fr 361px; background: #383838; }
.top-left { display: flex; padding-left: 8px; }
.logo { width: 16px; height: 22px; }
.menus { display: grid; grid-template-columns: 28px 31px 48px 51px 40px; height: 22px; margin-left: 7px; }
.menus button { justify-content: flex-start; }
.tabs { display: grid; grid-template-columns: 45px 57px 58px 62px 72px 60px 62px 71px 77px 17px; column-gap: 1px; align-items: end; }
.tabs button { height: 17px; background: #333; color: #919191; border: 1px solid #2e2e2e; border-bottom: 0; border-radius: 3px 3px 0 0; font-family: "DejaVu Sans Condensed", "DejaVu Sans", sans-serif; }
.tabs .on { background: #444; color: #e2e2e2; }
.bridge { display: flex; gap: 1px; margin: 3px 0 0 4px; height: 16px; }
.bridge button { width: 62px; gap: 6px; background: #595959; border-radius: 3px; }
.top-right { display: flex; gap: 5px; padding: 3px 7px 3px 9px; }

.idblock { display: flex; flex: 1; height: 16px; border-radius: 3px; overflow: hidden; background: #2e2e2e; }
.idblock input { flex: 1; width: 0; padding-left: 6px; background: #292929; }
.pick { width: 27px; background: #303030; }
.sq { width: 17px; height: 16px; background: #555; border-radius: 2px; }
.sq.dim { background: #424242; }
.sq.off { background: #525252; }
.sq.blue { --line: #fff; --solid: #f4f4f4; background: #5080a5; border-radius: 0; }
.sq.g { margin-left: 1px; border-radius: 0; }

.work { display: grid; grid-template: minmax(0, 1fr) / minmax(0, 1fr) 361px; column-gap: 3px; padding: 2px 0 2px 1px; }
.area { display: flex; flex-direction: column; min-height: 0; background: #444; border-radius: 6px; overflow: hidden; }
.bar { display: flex; align-items: center; height: 21px; padding-bottom: 1px; flex: none; background: #444; }
.dd { display: flex; align-items: center; justify-content: center; width: 26px; height: 16px; background: #303030; border-radius: 3px; flex: none; }
.dd select { padding-left: 2px; }
.dd.edge { border: 1px solid #484848; background: #343434; }
.dd.cc { width: 18px; border-radius: 0 3px 3px 0; }
.dd.wide { width: 28px; }
.dd.flat { width: 27px; border-radius: 0; }
.dd.ghost { background: #383838; }
.grp { display: flex; }

/* viewport */
.vbar { padding: 0 16px 1px 8px; }
.mode { width: 97px; margin-left: 5px; padding: 0 1px; }
.vmenus { display: grid; grid-template-columns: 36px 42px 32px 38px; margin-left: 10px; }
.vmenus button { justify-content: flex-start; }
.gis { width: 39px; justify-content: flex-start; padding-left: 7px; }
.retopo { width: 76px; padding: 0 1px 0 4px; }
.mid { display: flex; gap: 5px; margin-left: 214px; }
.orient { width: 70px; padding: 0 1px; }
.shade { display: flex; gap: 5px; margin-left: auto; }
.actions { margin-left: 2px; width: 87px; justify-content: flex-start; }
.stage { display: flex; flex: 1; min-height: 0; }
.toolbar { display: flex; flex-direction: column; gap: 2px; width: 49px; padding: 7px 7px 0 6px; }
.toolbar button { position: relative; height: 29px; padding-right: 6px; border-radius: 2px; }
.toolbar svg { width: 23px; height: 23px; }
.toolbar .on { background: #5082a8; }
.toolbar .sep { margin-top: 3px; }
.toolbar .more::after, .toolbar .on::after { content: ""; position: absolute; right: 2px; bottom: 1px; width: 4px; height: 4px; background: #999; clip-path: polygon(100% 0, 100% 100%, 0 100%); }
.scene3d { position: relative; flex: 1; min-width: 0; }
.world3d { position: absolute; inset: 0; width: 100%; height: 100%; }
.info { position: absolute; left: 18px; top: 7px; color: #dadcdb; text-shadow: 0 1px 2px #222, 0 0 2px #333; font: 9px/18px "DejaVu Sans Condensed", "DejaVu Sans", sans-serif; }
.overlay { position: absolute; right: 0; top: 7px; width: 73px; }
.axisball { width: 64px; height: 72px; }
.axisball text { font-size: 8px; font-weight: bold; fill: #222; text-anchor: middle; }
.nav { display: flex; flex-direction: column; gap: 2px; align-items: flex-end; padding-right: 7px; margin-top: -7px; }
.nav button { width: 22px; height: 22px; border-radius: 50%; background: #6e7473; }
.nav svg { width: 22px; height: 22px; fill: #d5d8d7; }
.handle { position: absolute; width: 8px; height: 13px; background: #7f8685; border-radius: 4px 0 0 4px; }
.handle svg { width: 8px; height: 13px; fill: none; stroke: #ccc; }
.overlay .handle { right: 0; top: 7px; }

/* outliner */
.side { display: flex; flex-direction: column; gap: 3px; min-height: 0; }
.outl { flex: 0 0 257px; background: #333; }
.obar, .pbar { background: #3a3a3a; padding: 0 7px 1px 8px; }
.obar .dd + .dd { margin-left: 5px; }
.find { display: flex; align-items: center; width: 106px; height: 16px; margin: 0 auto 0 52px; padding-left: 3px; background: #292929; border: 1px solid #444; border-radius: 3px; }
.find input { width: 80px; }
.obar .sq { margin-left: 4px; }
.tree { padding-top: 2px; color: #a8a8a8; }
.tree li { display: flex; align-items: center; position: relative; height: 18px; padding: 0 8px 0 23px; }
.tree span { margin-left: 6px; white-space: nowrap; }
.tree .root { padding-left: 19px; }
.tree input { width: 10px; height: 10px; margin: 0 5px 0 12px; background: #c9c9c9; border: 0; }
.tree input:checked::after { background: #222; }
.tree .tri.down + input { margin-left: 11px; }
.tree .tri { background: #999; }
.tree .kid { padding-left: 42px; }
.tree .kid .tri { margin-right: 8px; }
.tree .kid::before { content: ""; position: absolute; left: 44px; top: -9px; width: 12px; height: 18px; border: solid #777; border-width: 0 0 1px 1px; }
.tree .ex { margin-left: 19px; }
.tree .ic { width: 14px; height: 14px; }
.tree .ex + .ic { margin-left: 4px; }
.tree .ring { border-radius: 3px; box-shadow: 0 0 0 2px #484848; background: #484848; }
.tree .fill { background: #5a5a5a; box-shadow: 0 0 0 2px #5a5a5a; }
.tree .dim { color: #666; }
.tg { display: flex; gap: 5px; margin-left: auto; }
.tg svg { width: 13px; height: 13px; }
.dim .tg svg { opacity: .6; }
.dim .tg svg:first-child { opacity: .9; }

/* properties */
.props { flex: 1; }
.crumb { display: flex; align-items: center; gap: 5px; margin-left: 9px; }
.crumb + .crumb { margin-left: 27px; }
.bare { margin-left: auto; }
.pmain { display: flex; flex: 1; min-height: 0; }
.ptabs { display: flex; flex-direction: column; gap: 2px; width: 21px; padding-top: 6px; background: #2b2b2b; }
.ptabs button { height: 23px; background: #353535; }
.ptabs .first { height: 24px; margin-bottom: 6px; }
.ptabs .on { --line: #5f9fc0; --solid: #6cb3d4; background: #444; }
.pbody { flex: 1; min-width: 0; }
.idblock.wide { margin: 7px 7px 6px; background: #444; }
.phead { display: flex; align-items: center; justify-content: flex-start; width: 100%; height: 22px; padding: 2px 6px 0 8px; background: #5c5c5c; color: #dedede; }
.phead .tri { margin-right: 6px; }
.phead > .tri:not(.down) { margin-right: 6px; }
.phead input { margin: 0 4px 3px 1px; }
.phead.shut { height: 21px; }
.grip { width: 11px; height: 5px; margin-left: auto; background: radial-gradient(circle at 1px 1px, #ddd 0 1px, #2226 1px) 0 0 / 3px 3px; opacity: .6; }
.rows { display: flex; flex-direction: column; gap: 5px; padding: 7px 6px 6px 7px; }
.r { display: grid; grid-template-columns: minmax(0, 1fr) 160px; column-gap: 14px; height: 16px; align-items: center; }
.r.first { margin-bottom: 8px; }
.r > label { grid-column: 1; grid-row: 1; text-align: right; font-family: "DejaVu Sans Condensed", "DejaVu Sans", sans-serif; }
.r > .tri { grid-column: 1; grid-row: 1; margin-left: 1px; }
.r > div { grid-column: 2; display: flex; height: 16px; }
.sel { background: #303030; border-radius: 3px; align-items: center; }
.sel select { padding-left: 6px; }
.dot { display: grid; place-items: center; width: 17px; height: 16px; background: #303030; border-radius: 3px; flex: none; }
.dot::after { content: ""; width: 6px; height: 6px; border: 2px solid #a5a5a5; border-radius: 50%; }
.num { gap: 1px; }
.num > :first-child { flex: 1; width: 0; height: 16px; text-align: center; background: #292929; border-radius: 3px 0 0 3px; }
.num > .sky { background: #3f95ff; border-radius: 0; }
.num > .sunset { background: #cc6026; border-radius: 0; }
.num > .black { background: #000; border-radius: 0; }
.chk { align-items: center; gap: 4px; padding-left: 2px; }

.status { display: flex; align-items: center; background: #444; padding: 0 36px 0 7px; font-family: "DejaVu Sans Condensed", "DejaVu Sans", sans-serif; }
.status span { display: flex; align-items: center; gap: 5px; white-space: nowrap; }
.s1 { width: 61px; }
.s2 { width: 171px; }
.s3 { width: 231px; }
.frames { margin-left: auto; }
.time { margin: 0 28px 0 43px; }

/* node editor window */
.window { position: absolute; left: 913px; top: 476px; width: 664px; bottom: 4px; display: flex; flex-direction: column; background: #2b2b2b; border: solid #4c4a47; border-width: 0 2px 2px 1px; box-shadow: 0 0 8px #0009; }
.title { display: flex; align-items: center; --solid: #e87d0d; --hole: #fff; --pupil: #265787; height: 30px; flex: none; margin: 0 -2px 1px -1px; padding: 0 12px 0 8px; background: #4c4a47; color: #9b9a98; font: 12px/16px "Open Sans", sans-serif; }
.title span { flex: 1; padding-left: 5px; }
.title button { width: 46px; height: 30px; }
.title button:last-child { width: 24px; margin-left: 11px; }
.title button svg { width: 12px; height: 12px; fill: none; stroke: #b5b3b1; }
.nbar { padding-left: 8px; border-radius: 6px 6px 0 0; overflow: hidden; }
.kind { width: 79px; margin-left: 5px; padding: 0 1px; }
.nmenus { display: grid; grid-template-columns: 36px 36px 32px 38px; margin-left: 9px; }
.nmenus button { justify-content: flex-start; height: 18px; }
.nmenus .on { justify-content: center; background: #5082a8; border-radius: 3px; color: #fff; }
.nmenus .on + button { padding-left: 6px; }
.use { display: flex; align-items: center; gap: 6px; width: 90px; margin-left: 6px; }
.slot { width: 70px; padding: 0 1px 0 3px; }
.mat { flex: none; width: 210px; margin-left: 5px; background: #444; }
.mat .sq { width: 18px; }
.nbar .bare { margin: 0 -5px 0 auto; }

.canvas {
  position: relative;
  flex: 1;
  overflow: hidden;
  border-radius: 0 0 6px 6px;
  background-color: #585858;
  background-image:
    linear-gradient(90deg, #484848 1px, transparent 1px),
    linear-gradient(#484848 1px, transparent 1px),
    linear-gradient(90deg, transparent 15px, #4f4f4f 15px 16px, transparent 16px 31px, #4f4f4f 31px 32px, transparent 32px 46px, #4f4f4f 46px 47px, transparent 47px 62px, #4f4f4f 62px 63px, transparent 63px),
    linear-gradient(transparent 15px, #4f4f4f 15px 16px, transparent 16px 31px, #4f4f4f 31px 32px, transparent 32px 46px, #4f4f4f 46px 47px, transparent 47px 62px, #4f4f4f 62px 63px, transparent 63px);
  background-size: 77px 77px;
  background-position: 18px 70px;
}
.links { position: absolute; inset: 0; width: 100%; height: 100%; fill: none; stroke: #8f8f8f; stroke-width: 2; }
.canvas .handle { background: #444; top: 14px; }
.hl { left: -2px; border-radius: 0 4px 4px 0; }
.hr { right: -1px; }
.tip { position: absolute; left: 179px; top: 7px; width: 106px; height: 34px; padding: 9px 10px; background: #ffffdc; border: 1px solid #111; color: #444; text-shadow: 0 1px 2px #555; white-space: nowrap; font-family: "DejaVu Sans Condensed", "DejaVu Sans", sans-serif; }
.matname { position: absolute; left: 26px; bottom: 21px; color: #eee; font-size: 9px; }

.node { position: absolute; width: 110px; background: #3b3b3b; border: 1px solid #232323; border-radius: 4px; box-shadow: 0 1px 6px #0009; color: #e2e2e2; font: 9px/14px "DejaVu Sans Condensed", "DejaVu Sans", sans-serif; }
.scat { left: 120px; top: 225px; }
.spec { left: 329px; top: 25px; }
.outp { left: 481px; top: 12px; width: 97px; height: 77px; }
.node h3 { display: flex; align-items: center; gap: 4px; height: 17px; padding: 0 0 0 6px; font-size: 9px; white-space: nowrap; }
.node h3 .tri { width: 5px; height: 5px; margin: 0 2px; }
.out { position: relative; height: 20px; padding: 3px 14px 0 0; text-align: right; }
.out .s { right: -5px; top: 7px; }
.s { position: absolute; width: 7px; height: 7px; border: 1px solid #222; border-radius: 50%; }
.green { background: #63c763; }
.gray { background: #a1a1a1; }
.yellow { background: #c7c729; }
.ochre { background: #b0a02f; }
.pick2 { display: flex; align-items: center; height: 14px; margin: 7px 9px 0; padding: 0 1px 0 5px; background: #303030; border-radius: 3px; color: #c0c0c0; }
.pick2 select, .ins .n, .ins .k { font-family: "DejaVu Sans", sans-serif; }
.scat .pick2 select { font-family: inherit; font-size: 10px; }
.ins { display: grid; grid-auto-rows: 1fr; height: 131px; margin-top: 5px; }
.ins > div { position: relative; display: flex; align-items: center; padding: 0 9px; }
.ins .s { left: -4px; }
.ins.roomy { height: 223px; margin-top: 3px; }
.ins.tight { height: 114px; margin-top: 0; }
.spec { padding-bottom: 4px; }
.scat { padding-bottom: 4px; }
.t { padding-left: 5px; white-space: nowrap; }
.n { display: flex; align-items: center; flex: 1; height: 14px; padding: 0 12px 0 10px; background: #292929; border-radius: 3px; color: #c0c0c0; }
.n span { width: 38px; white-space: nowrap; overflow: hidden; font-family: "DejaVu Sans Condensed", "DejaVu Sans", sans-serif; }
.n input { width: 30px; margin-left: auto; text-align: right; }
.k { display: flex; align-items: center; gap: 5px; color: #b5b5b5; white-space: nowrap; }
.k input[type=checkbox] { width: 11px; height: 11px; margin-left: 1px; }
.c { width: 41px; height: 14px; margin-left: auto; }
.black { background: #000; }
.white { background: #fff; }
.pale { background: #dcdcdc; }
.dark { background: #363636; }
.outp h3 { background: #222; border-radius: 3px 3px 0 0; }
.outp .pick2 { margin: 3px 9px 0 7px; }
.outp .ins { height: 36px; margin-top: 2px; }
.outp .ins > div { padding: 0 7px; }
```
